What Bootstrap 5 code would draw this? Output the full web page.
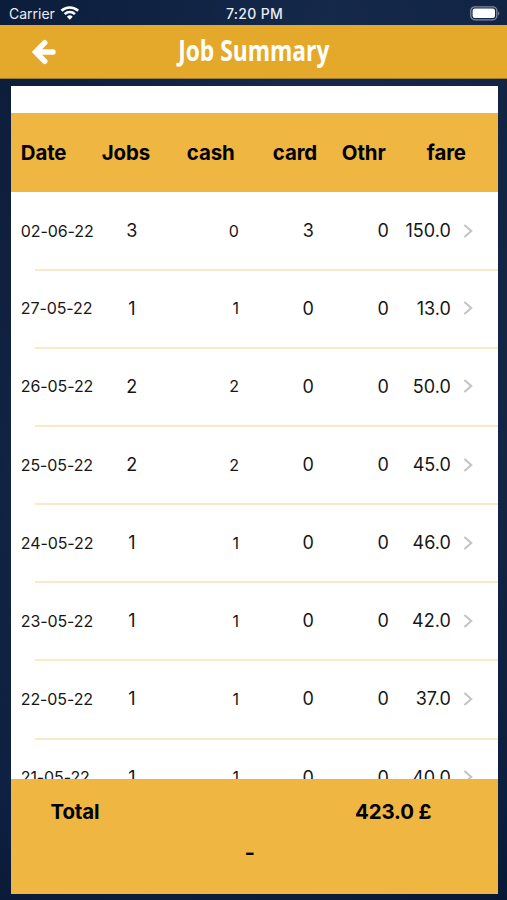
<!DOCTYPE html>
<html lang="en">
<head>
<meta charset="utf-8">
<meta name="viewport" content="width=device-width, initial-scale=1">
<title>Job Summary</title>
<link href="https://cdn.jsdelivr.net/npm/bootstrap@5.3.0/dist/css/bootstrap.min.css" rel="stylesheet">
<style>
body{height:900px;font-family:Inter,"Liberation Sans",sans-serif;color:#000;background:linear-gradient(100deg,rgba(4,20,46,.55),rgba(26,44,78,.1) 50%,rgba(4,20,46,.4)),linear-gradient(#14284a,#1a2e50 50%,#12264a 88%,#0b1c3b)}
.status{height:25px;font-size:14px;color:#e9edf4;padding:2px 7px 0 9px}
.status>*{flex:1 1 0}
.clock{font-weight:500;letter-spacing:.3px}
.topbar{height:54px;background:#e4a92b;border-bottom:1px solid #9c7c2e}
.back{width:24px;margin-left:32px}
.title{font:700 29px/54px "Open Sans",sans-serif;color:#fff}
.title span{display:inline-block;transform:translate(-1.5px,-2px) scaleX(.785)}
.panel{margin:7px 9.5px 0 10.5px;height:808px}
.spacer{height:27px}
.gold{background:#efb642}
.heads{height:78.5px;display:grid;grid-template-columns:81px 85px 86px 69px 85px 1fr;padding:2px 0 0 10.3px;font-size:20.4px;font-weight:700;letter-spacing:-.1px}
.rows{height:587.5px}
.job{height:78.15px;display:grid;grid-template-columns:90px 42px 86px 75px 75px 62px 1fr;padding:1px 0 0 10.3px;font-size:18px;color:#161616}
.job:first-child{height:77.2px}
.job+.job{background:linear-gradient(#fbe8c6 2px,transparent 2px) 24px 0/100% 100% no-repeat}
.job .sm{font-size:16px;letter-spacing:-.1px}
.totals{height:115px;font-size:20.4px;font-weight:700}
.totals .line{padding:18px 66px 0 40px;line-height:29px;letter-spacing:-.1px}
.dash{line-height:26px;margin-top:14px;padding-right:9px}
.dash span{display:inline-block;transform:scaleX(1.1)}
</style>
<script src="https://cdn.jsdelivr.net/npm/bootstrap@5.3.0/dist/js/bootstrap.bundle.min.js"></script>
</head>
<body class="overflow-hidden">
<div class="status d-flex align-items-center">
  <div class="d-flex align-items-center gap-1"><span>Carrier</span>
    <svg width="20" height="15" viewBox="-.8 .6 20 15" fill="none" stroke="#fff" stroke-width="2.6"><path d="M1.7 5.4a12 12 0 0 1 16.6 0M4.9 8.7a7.3 7.3 0 0 1 10.2 0"/><path d="M10 14.3 7.1 11.3a4.2 4.2 0 0 1 5.8 0z" fill="#fff" stroke="none"/></svg>
  </div>
  <div class="clock text-center">7:20 PM</div>
  <div class="d-flex justify-content-end">
    <svg width="30" height="15" viewBox="0 0 30 15"><rect x=".8" y=".8" width="26" height="13" rx="4" fill="none" stroke="#7f8ba1" stroke-width="1.3"/><rect x="2.6" y="2.6" width="22.4" height="9.4" rx="2.2" fill="#fff"/><path d="M28.2 5.2c1.6.8 1.6 3.6 0 4.4z" fill="#7f8ba1"/></svg>
  </div>
</div>
<header class="topbar d-flex align-items-center">
  <svg class="back" height="26" viewBox="0 0 24 26" fill="none" stroke="#fff" stroke-width="5.4"><path d="M12.8 3.6 3.6 13l9.2 9.4M5 13h16" stroke-linecap="round"/></svg>
  <div class="title flex-grow-1 text-center pe-5 me-1"><span>Job Summary</span></div>
</header>
<main class="panel bg-white d-flex flex-column">
  <div class="spacer"></div>
  <div class="heads gold align-items-center"><span>Date</span><span>Jobs</span><span>cash</span><span>card</span><span>Othr</span><span>fare</span></div>
  <div class="rows overflow-hidden" id="rows"></div>
  <footer class="totals gold">
    <div class="line d-flex justify-content-between"><span>Total</span><span>423.0 £</span></div>
    <div class="dash text-center"><span>-</span></div>
  </footer>
</main>
<script>
const jobs=[["02-06-22",3,0,3,0,"150.0"],["27-05-22",1,1,0,0,"13.0"],["26-05-22",2,2,0,0,"50.0"],["25-05-22",2,2,0,0,"45.0"],["24-05-22",1,1,0,0,"46.0"],["23-05-22",1,1,0,0,"42.0"],["22-05-22",1,1,0,0,"37.0"],["21-05-22",1,1,0,0,"40.0"]];
document.getElementById("rows").innerHTML=jobs.map(([d,j,c,k,o,f])=>`<div class="job align-items-center"><span class="sm">${d}</span><span class="text-center">${j}</span><span class="sm text-end">${c}</span><span class="text-end">${k}</span><span class="text-end">${o}</span><span class="text-end">${f}</span><svg class="ms-2 ps-1" width="15" height="16" viewBox="0 0 12 16" fill="none" stroke="#c3c3c6" stroke-width="2.2"><path d="M1.5 1.5 9 8l-7.5 6.5"/></svg></div>`).join("");
</script>
</body>
</html>
